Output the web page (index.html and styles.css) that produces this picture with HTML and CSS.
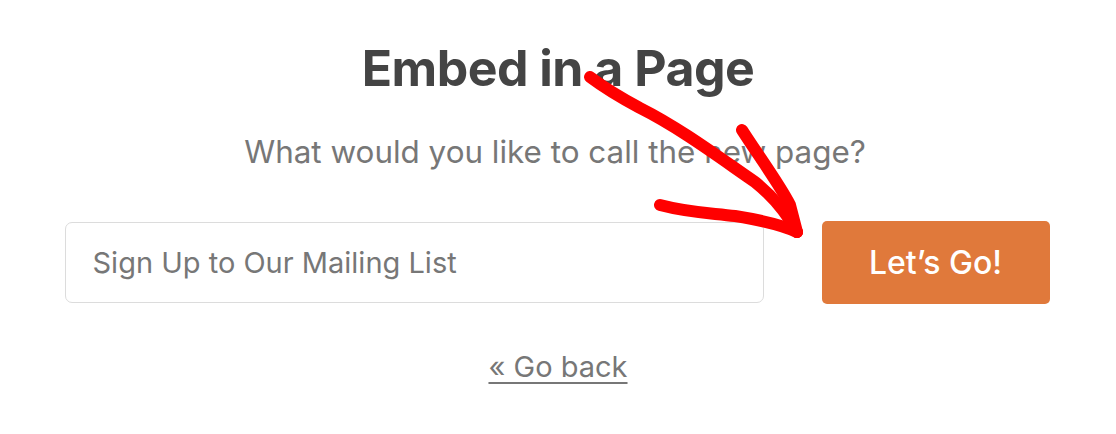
FILE: index.html
```html
<!DOCTYPE html>
<html>
<head>
<meta charset="utf-8">
<link rel="stylesheet" href="styles.css">
</head>
<body>
<main class="page">
  <h1 class="title">Embed in a Page</h1>
  <p class="subtitle">What would you like to call the new page?</p>
  <div class="row">
    <input class="name-input" type="text" placeholder="Sign Up to Our Mailing List">
    <button class="go-btn">Let’s Go!</button>
  </div>
  <a class="back" href="#">« Go back</a>
  <svg class="arrow" width="1116" height="434" viewBox="0 0 1116 434">
    <path d="M590 77 C 610 92, 625 100, 640 108 C 680 128, 720 158, 755 182 C 770 194, 785 210, 797 232" />
    <path d="M742 130 C 760 158, 780 185, 790 205 L 797 232" />
    <path d="M660 205 C 690 213, 712 213, 735 216 C 760 220, 780 224, 797 232" />
  </svg>
</main>
</body>
</html>
```
FILE: styles.css
```css
html, body {
  margin: 0;
  padding: 0;
  background: #ffffff;
}
.page {
  position: relative;
  width: 1116px;
  height: 434px;
  display: flex;
  flex-direction: column;
  align-items: center;
  font-family: Inter, "Liberation Sans", sans-serif;
  overflow: hidden;
}
.title {
  margin: 38px 0 0 0;
  font-size: 50px;
  line-height: 60px;
  font-weight: 700;
  color: #444444;
  letter-spacing: -0.5px;
}
.subtitle {
  margin: 34px 0 0 -6px;
  font-size: 31.4px;
  line-height: 40px;
  color: #777777;
  font-weight: 400;
}
.row {
  display: flex;
  gap: 58px;
  margin-top: 49px;
  width: 985px;
  margin-left: -2px;
}
.name-input {
  box-sizing: border-box;
  width: 699px;
  height: 81px;
  margin-top: 1px;
  border: 1.5px solid #dcdcdc;
  border-radius: 7px;
  padding: 0 0 0 27px;
  font-family: Inter, "Liberation Sans", sans-serif;
  font-size: 29px;
  color: #777777;
  outline: none;
}
.name-input::placeholder {
  color: #777777;
}
.go-btn {
  box-sizing: border-box;
  width: 228px;
  height: 83px;
  border: none;
  border-radius: 5px;
  background: #e0793b;
  color: #ffffff;
  font-family: Inter, "Liberation Sans", sans-serif;
  font-size: 32px;
  font-weight: 500;
}
.back {
  margin-top: 46px;
  font-size: 29px;
  line-height: 34px;
  color: #777777;
  text-decoration: underline;
  text-underline-offset: 5px;
  text-decoration-thickness: 2px;
}
.arrow {
  position: absolute;
  left: 0;
  top: 0;
  pointer-events: none;
}
.arrow path {
  fill: none;
  stroke: #ff0000;
  stroke-width: 12;
  stroke-linecap: round;
  stroke-linejoin: round;
}
```
